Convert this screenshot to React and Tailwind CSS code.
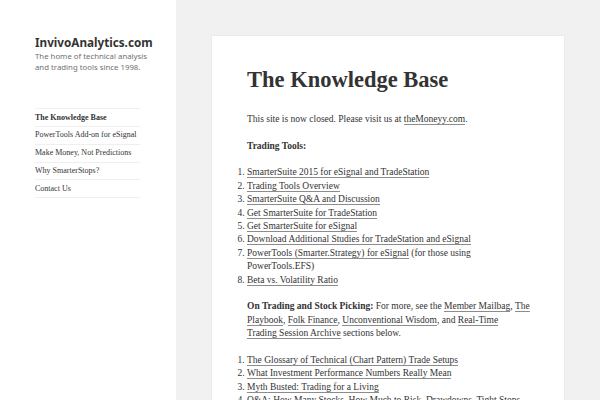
import React from 'react'

const serif = { fontFamily: '"Liberation Serif", "Times New Roman", serif' }

function L({ children }) {
  return <a href="#" className="border-b border-[#8c8c8c] text-[#333]">{children}</a>
}

const menu = [
  'The Knowledge Base',
  'PowerTools Add-on for eSignal',
  'Make Money, Not Predictions',
  'Why SmarterStops?',
  'Contact Us',
]

export default function App() {
  return (
    <div className="min-h-screen flex bg-[#f1f1f1] text-[#333]">
      <aside className="w-[176px] shrink-0 bg-white pl-[35px] pt-[34.7px]">
        <h1 className="font-['Noto_Sans',sans-serif] font-bold text-[11.7px] leading-[15px] text-[#333]">
          InvivoAnalytics.com
        </h1>
        <p className="mt-[0.9px] font-['Noto_Sans',sans-serif] text-[7.8px] leading-[11.3px] text-[#707070]">
          The home of technical analysis<br />and trading tools since 1998.
        </p>
        <nav className="mt-[35.1px] w-[105px] border-t border-[#efefef]" style={serif}>
          <ul>
            {menu.map((m, i) => (
              <li key={m} className="border-b border-[#efefef]">
                <a href="#" className={`block py-[2.4px] text-[8px] leading-[12px] text-[#333] ${i === 0 ? 'font-bold' : ''}`}>
                  {m}
                </a>
              </li>
            ))}
          </ul>
        </nav>
      </aside>

      <main className="flex-1 px-[36px] pt-[36px]">
        <article className="bg-white shadow-[0_0_1px_rgba(0,0,0,0.15)] pl-[35px] pr-[32px] pt-[32.4px] pb-10" style={serif}>
          <h2 className="font-bold text-[22.5px] leading-[24px] text-[#333]">The Knowledge Base</h2>
          <div className="mt-[20.4px] text-[9.5px] leading-[13.4px] text-[#333]">
            <p>This site is now closed. Please visit us at <L>theMoneyy.com</L>.</p>
            <p className="mt-[13.4px] font-bold">Trading Tools:</p>
            <ol className="mt-[13.4px] list-decimal">
              <li><L>SmarterSuite 2015 for eSignal and TradeStation</L></li>
              <li><L>Trading Tools Overview</L></li>
              <li><L>SmarterSuite Q&amp;A and Discussion</L></li>
              <li><L>Get SmarterSuite for TradeStation</L></li>
              <li><L>Get SmarterSuite for eSignal</L></li>
              <li><L>Download Additional Studies for TradeStation and eSignal</L></li>
              <li><L>PowerTools (Smarter.Strategy) for eSignal</L> (for those using PowerTools.EFS)</li>
              <li><L>Beta vs. Volatility Ratio</L></li>
            </ol>
            <p className="mt-[13.4px]">
              <strong>On Trading and Stock Picking:</strong> For more, see the <L>Member Mailbag</L>, <L>The Playbook</L>, <L>Folk Finance</L>, <L>Unconventional Wisdom</L>, and <L>Real-Time<br />Trading Session Archive</L> sections below.
            </p>
            <ol className="mt-[13.4px] list-decimal">
              <li><L>The Glossary of Technical (Chart Pattern) Trade Setups</L></li>
              <li><L>What Investment Performance Numbers Really Mean</L></li>
              <li><L>Myth Busted: Trading for a Living</L></li>
              <li><L>Q&amp;A: How Many Stocks, How Much to Risk, Drawdowns, Tight Stops</L></li>
              <li><L>Why Most Traders Fail</L></li>
            </ol>
          </div>
        </article>
      </main>
    </div>
  )
}
